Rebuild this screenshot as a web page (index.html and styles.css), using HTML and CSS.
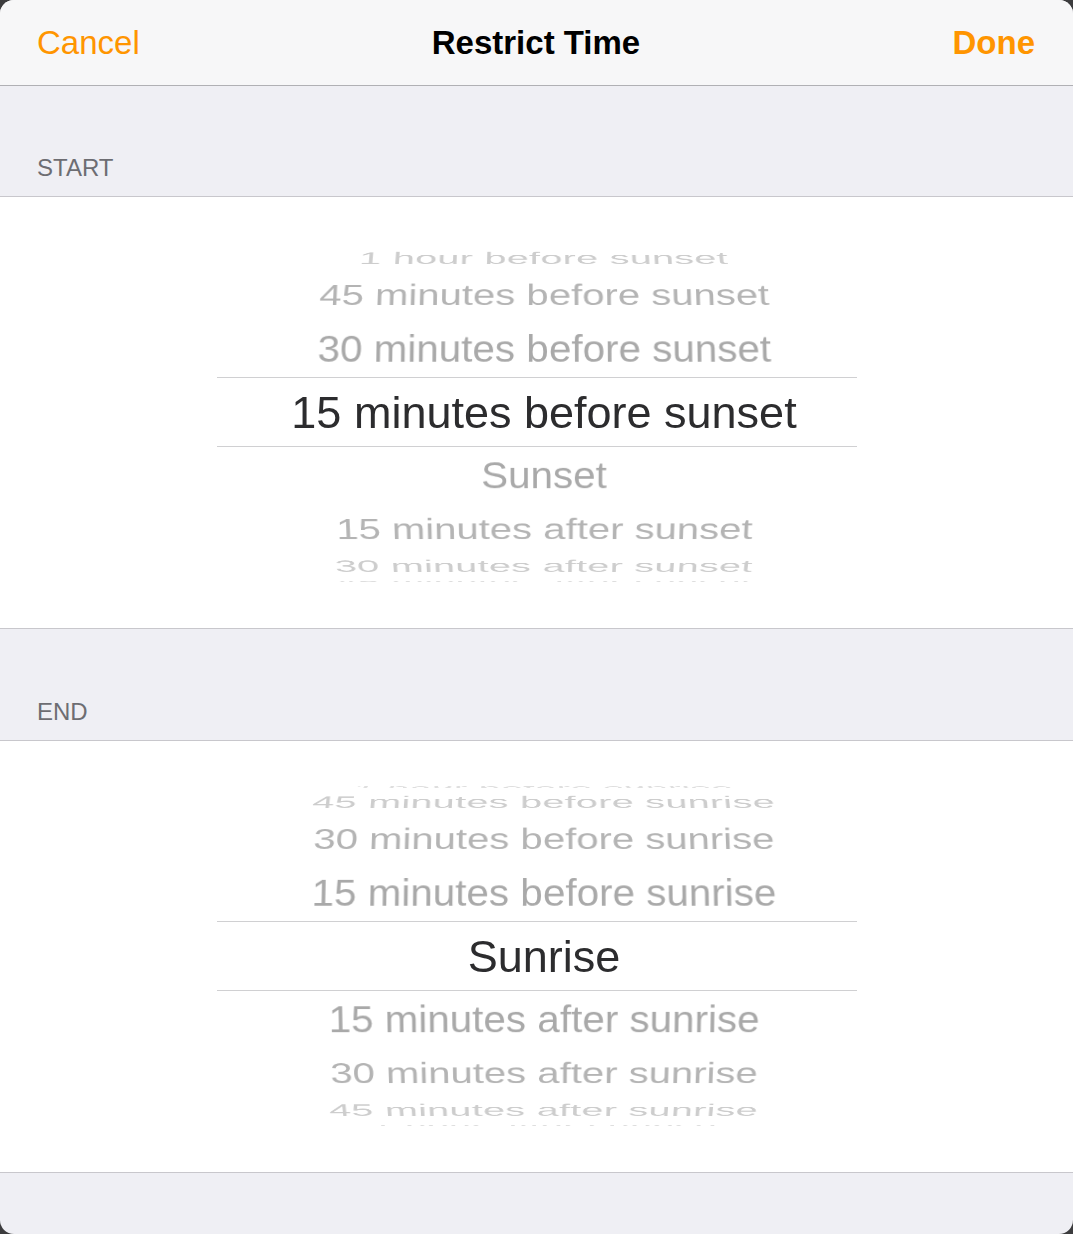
FILE: index.html
```html
<!DOCTYPE html>
<html lang="en">
<head>
    <meta charset="UTF-8">
    <meta name="viewport" content="width=device-width, initial-scale=1.0">
    <title>Restrict Time</title>
    <link rel="stylesheet" href="styles.css">
</head>
<body>

    <div class="sheet">
        <header class="nav-bar">
            <button class="nav-btn cancel-btn">Cancel</button>
            <h1 class="nav-title">Restrict Time</h1>
            <button class="nav-btn done-btn">Done</button>
        </header>

        <div class="section-head">START</div>
        <div class="picker">
            <div class="wheel">
                <div class="selection"></div>
                <div class="row d3" style="--k: -3">1 hour before sunset</div>
                <div class="row d2" style="--k: -2">45 minutes before sunset</div>
                <div class="row d1" style="--k: -1">30 minutes before sunset</div>
                <div class="row selected" style="--k: 0">15 minutes before sunset</div>
                <div class="row d1" style="--k: 1">Sunset</div>
                <div class="row d2" style="--k: 2">15 minutes after sunset</div>
                <div class="row d3" style="--k: 3">30 minutes after sunset</div>
                <div class="row d4" style="--k: 4">45 minutes after sunset</div>
            </div>
        </div>

        <div class="section-head end-head">END</div>
        <div class="picker">
            <div class="wheel">
                <div class="selection"></div>
                <div class="row d4" style="--k: -4">1 hour before sunrise</div>
                <div class="row d3" style="--k: -3">45 minutes before sunrise</div>
                <div class="row d2" style="--k: -2">30 minutes before sunrise</div>
                <div class="row d1" style="--k: -1">15 minutes before sunrise</div>
                <div class="row selected" style="--k: 0">Sunrise</div>
                <div class="row d1" style="--k: 1">15 minutes after sunrise</div>
                <div class="row d2" style="--k: 2">30 minutes after sunrise</div>
                <div class="row d3" style="--k: 3">45 minutes after sunrise</div>
                <div class="row d4" style="--k: 4">1 hour after sunrise</div>
            </div>
        </div>

        <div class="sheet-foot"></div>
    </div>

</body>
</html>
```

FILE: styles.css
```css
:root {
    --orange: rgb(255, 149, 0);
    --group-bg: rgb(239, 239, 244);
    --wheel-radius: 177px;
    --step: 21deg;
}

body {
    margin: 0;
    background: rgb(60, 60, 62);
    font-family: "Liberation Sans", Arial, sans-serif;
}

.sheet {
    display: flex;
    flex-direction: column;
    height: 1234px;
    border-radius: 14px;
    overflow: hidden;
    background: var(--group-bg);
}

.nav-bar {
    display: grid;
    grid-template-columns: 1fr auto 1fr;
    align-items: center;
    height: 85px;
    padding: 0 38px 0 37px;
    background: rgb(247, 247, 248);
    border-bottom: 1px solid rgb(176, 176, 180);
}

.nav-btn {
    background: none;
    border: none;
    padding: 0;
    font-family: inherit;
    font-size: 33px;
    color: var(--orange);
    cursor: pointer;
}

.cancel-btn {
    justify-self: start;
}

.done-btn {
    justify-self: end;
    font-weight: bold;
}

.nav-title {
    margin: 0;
    font-size: 33px;
    font-weight: bold;
    color: black;
}

.section-head {
    display: flex;
    align-items: flex-end;
    height: 110px;
    box-sizing: border-box;
    padding: 0 0 16px 37px;
    font-size: 24px;
    line-height: 24px;
    color: rgb(109, 109, 114);
}

.end-head {
    height: 111px;
}

.picker {
    display: flex;
    justify-content: center;
    align-items: center;
    height: 431px;
    background: white;
    border-top: 1px solid rgb(200, 199, 204);
    border-bottom: 1px solid rgb(200, 199, 204);
}

.wheel {
    display: grid;
    width: 640px;
    height: 352px;
    overflow: hidden;
    perspective: 4000px;
}

.wheel > * {
    grid-area: 1 / 1;
    align-self: center;
    justify-self: center;
}

.selection {
    width: 640px;
    height: 70px;
    box-sizing: border-box;
    margin-top: -2px;
    border-top: 1px solid rgb(208, 208, 210);
    border-bottom: 1px solid rgb(208, 208, 210);
}

.row {
    margin-left: 15px;
    font-size: 40.5px;
    line-height: 1;
    white-space: nowrap;
    color: rgb(169, 169, 169);
    backface-visibility: hidden;
    transform: translateZ(calc(var(--wheel-radius) * -1))
        rotateX(calc(var(--k) * var(--step) * -1))
        translateZ(var(--wheel-radius));
}

.selected {
    font-size: 45px;
    color: rgb(44, 44, 46);
}

.d2 {
    color: rgb(180, 180, 180);
}

.d3 {
    color: rgb(205, 205, 205);
    letter-spacing: .3px;
}

.d4 {
    color: rgb(222, 222, 222);
    letter-spacing: .5px;
}

.sheet-foot {
    flex: 1;
}
```
